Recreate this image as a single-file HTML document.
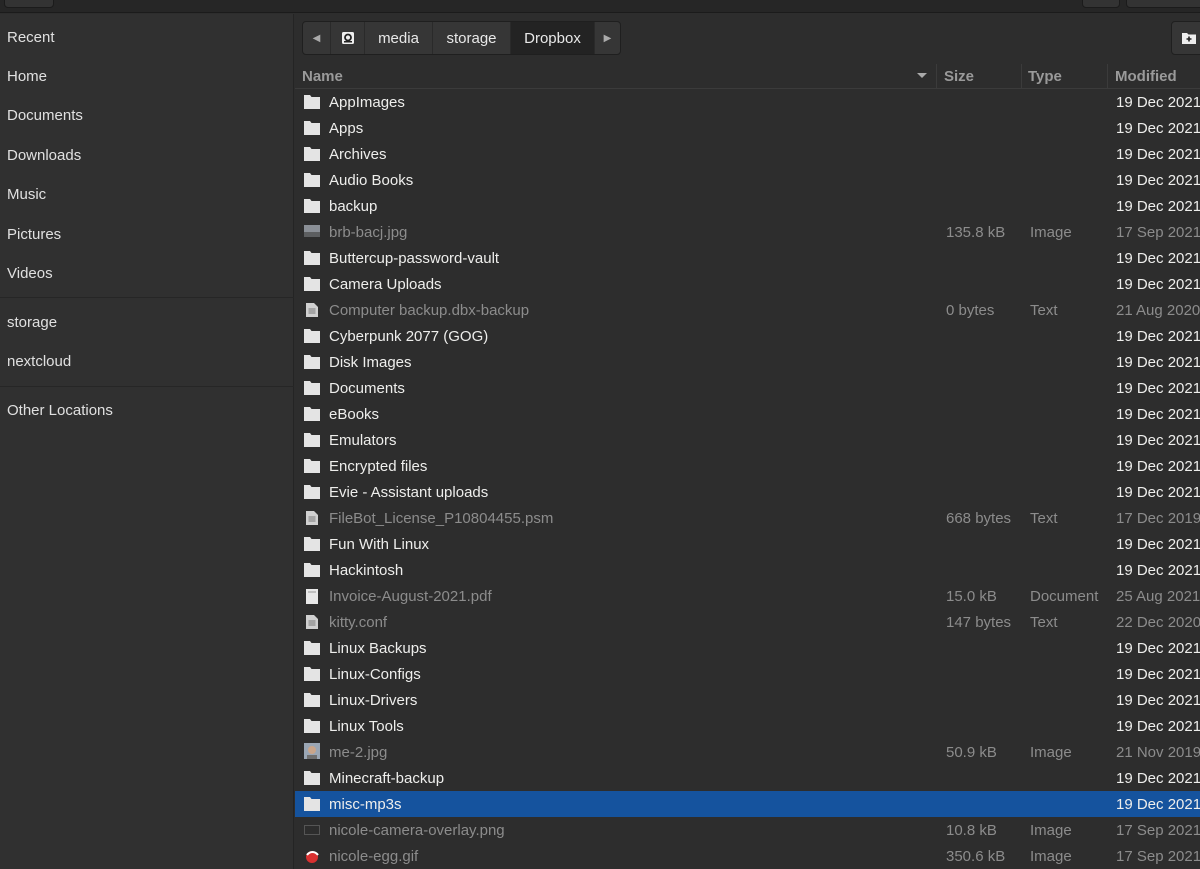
<!DOCTYPE html>
<html><head><meta charset="utf-8">
<style>
*{box-sizing:border-box;margin:0;padding:0}
body{width:1200px;height:869px;overflow:hidden;background:#2d2d2d;font-family:"Liberation Sans",sans-serif;font-size:15px;color:#eeeeec;position:relative}
.top{position:absolute;left:0;top:0;width:1200px;height:13px;background:#262626;border-bottom:1px solid #1b1b1b}
.tb{position:absolute;top:-4px;height:12px;border:1px solid #1b1b1b;border-radius:4px;background:#333}
.side{position:absolute;left:0;top:14px;width:294px;height:855px;background:#303030;border-right:1px solid #242424}
.si{position:absolute;left:7px;color:#e0e0e0;margin-top:1px}
.sep{position:absolute;left:0;width:294px;height:1px;background:#262626}
.path{position:absolute;left:302px;top:21px;height:34px;display:flex;border:1px solid #1f1f1f;border-radius:4px;background:#363636;overflow:hidden}
.path div{height:32px;line-height:34px;border-right:1px solid #2a2a2a;text-align:center;color:#e8e8e8}
.nf{position:absolute;left:1171px;top:21px;width:40px;height:34px;border:1px solid #1f1f1f;border-radius:4px;background:#363636}
.hdr{position:absolute;left:295px;top:62px;width:905px;height:27px;border-bottom:1px solid #3b3b3b;color:#9a9a9a;font-weight:bold}
.hdr span{position:absolute;top:6px}
.cd{position:absolute;top:2px;width:1px;height:24px;background:#3b3b3b}
.row{position:absolute;left:295px;width:905px;height:26px}
.row span{position:absolute;top:5px;white-space:nowrap}
.n{left:34px}.s{left:651px}.t{left:735px}.m{left:821px}
.d{color:#8c8c8c}
.ic{position:absolute;left:9px;top:6px}
.sel{background:#15539e}
</style></head><body>
<div class="top"><div class="tb" style="left:4px;width:50px"></div><div class="tb" style="left:1082px;width:38px"></div><div class="tb" style="left:1126px;width:80px"></div></div>
<div class="side">
<div class="si" style="top:14px">Recent</div>
<div class="si" style="top:53px">Home</div>
<div class="si" style="top:92px">Documents</div>
<div class="si" style="top:132px">Downloads</div>
<div class="si" style="top:171px">Music</div>
<div class="si" style="top:211px">Pictures</div>
<div class="si" style="top:250px">Videos</div>
<div class="sep" style="top:283px"></div>
<div class="si" style="top:299px">storage</div>
<div class="si" style="top:338px">nextcloud</div>
<div class="sep" style="top:372px"></div>
<div class="si" style="top:387px">Other Locations</div>
</div>
<div class="path">
<div style="width:28px;color:#aaa;font-size:10px">&#9664;</div>
<div style="width:34px"><svg width="12" height="12" viewBox="0 0 12 12" style="margin-top:10px"><rect x="0" y="0" width="12" height="12" rx="1.5" fill="#eee"/><circle cx="6" cy="5.5" r="3" fill="none" stroke="#222" stroke-width="1.8"/><rect x="2" y="9" width="8" height="1.5" fill="#222"/></svg></div>
<div style="width:68px">media</div>
<div style="width:78px">storage</div>
<div style="width:84px;background:#232323">Dropbox</div>
<div style="width:25px;color:#aaa;font-size:10px;border:none">&#9654;</div>
</div>
<div class="nf"><svg width="14" height="12" viewBox="0 0 14 12" style="position:absolute;left:10px;top:10px"><path d="M0 1h5l1.5 1.5H14V12H0z" fill="#eee"/><path d="M7 4.5v5M4.5 7h5" stroke="#222" stroke-width="1.6"/></svg></div>
<div class="hdr">
<span style="left:7px">Name</span>
<svg width="10" height="6" style="position:absolute;left:622px;top:11px"><path d="M0 0h10L5 5z" fill="#aaa"/></svg>
<div class="cd" style="left:641px"></div><span style="left:649px">Size</span>
<div class="cd" style="left:726px"></div><span style="left:733px">Type</span>
<div class="cd" style="left:812px"></div><span style="left:820px">Modified</span>
</div>
<svg width="0" height="0" style="position:absolute"><defs>
<symbol id="fo" viewBox="0 0 16 14"><path d="M0 0h6l1.5 2H16v12H0z" fill="#e4e4e4"/></symbol>
<symbol id="tx" viewBox="0 0 12 14"><path d="M0 0h8l4 4v10H0z" fill="#d0d0d0"/><path d="M2.5 6h7M2.5 8h7M2.5 10h7" stroke="#777" stroke-width="1"/></symbol>
</defs></svg>
<div id="rows"></div>
<script>
var R=[["f","AppImages"],["f","Apps"],["f","Archives"],["f","Audio Books"],["f","backup"],["i1","brb-bacj.jpg","135.8 kB","Image","17 Sep 2021"],["f","Buttercup-password-vault"],["f","Camera Uploads"],["t","Computer backup.dbx-backup","0 bytes","Text","21 Aug 2020"],["f","Cyberpunk 2077 (GOG)"],["f","Disk Images"],["f","Documents"],["f","eBooks"],["f","Emulators"],["f","Encrypted files"],["f","Evie - Assistant uploads"],["t","FileBot_License_P10804455.psm","668 bytes","Text","17 Dec 2019"],["f","Fun With Linux"],["f","Hackintosh"],["p","Invoice-August-2021.pdf","15.0 kB","Document","25 Aug 2021"],["t","kitty.conf","147 bytes","Text","22 Dec 2020"],["f","Linux Backups"],["f","Linux-Configs"],["f","Linux-Drivers"],["f","Linux Tools"],["i2","me-2.jpg","50.9 kB","Image","21 Nov 2019"],["f","Minecraft-backup"],["f","misc-mp3s"],["i3","nicole-camera-overlay.png","10.8 kB","Image","17 Sep 2021"],["i4","nicole-egg.gif","350.6 kB","Image","17 Sep 2021"]];
var h="";
R.forEach(function(r,i){
var top=89+26*i,k=r[0],ic;
if(k=="f")ic='<svg class="ic" width="16" height="14" style="top:6px"><use href="#fo"/></svg>';
else if(k=="t")ic='<svg class="ic" width="12" height="14" style="left:11px"><use href="#tx"/></svg>';
else if(k=="p")ic='<svg class="ic" width="12" height="15" viewBox="0 0 12 15" style="left:11px"><rect width="12" height="15" fill="#e8e8e8"/><path d="M2 3h8" stroke="#999"/></svg>';
else if(k=="i1")ic='<svg class="ic" width="16" height="12" viewBox="0 0 16 12"><rect width="16" height="12" fill="#8a8f96"/><rect y="7" width="16" height="5" fill="#5c5e60"/></svg>';
else if(k=="i2")ic='<svg class="ic" width="16" height="16" viewBox="0 0 16 16" style="top:4px"><rect width="16" height="16" fill="#9aa6b4"/><circle cx="8" cy="7" r="4" fill="#c9a58a"/><rect x="3" y="12" width="10" height="4" fill="#6e6e6e"/></svg>';
else if(k=="i3")ic='<svg class="ic" width="16" height="10" viewBox="0 0 16 10" style="top:8px"><rect x=".5" y=".5" width="15" height="9" fill="none" stroke="#555"/></svg>';
else ic='<svg class="ic" width="14" height="14" viewBox="0 0 14 14" style="left:10px"><circle cx="7" cy="8" r="6" fill="#d93030"/><path d="M2 6c3-4 8-4 11 0" stroke="#fff" stroke-width="2" fill="none"/></svg>';
var dim=k!="f"?" d":"";
h+='<div class="row'+(i==27?' sel':'')+'" style="top:'+top+'px">'+ic+'<span class="n'+dim+'">'+r[1]+'</span>'+
(r[2]?'<span class="s d">'+r[2]+'</span><span class="t d">'+r[3]+'</span>':'')+
'<span class="m'+dim+'">'+(r[4]||"19 Dec 2021")+'</span></div>';
});
document.getElementById("rows").innerHTML=h;
</script>
</body></html>
